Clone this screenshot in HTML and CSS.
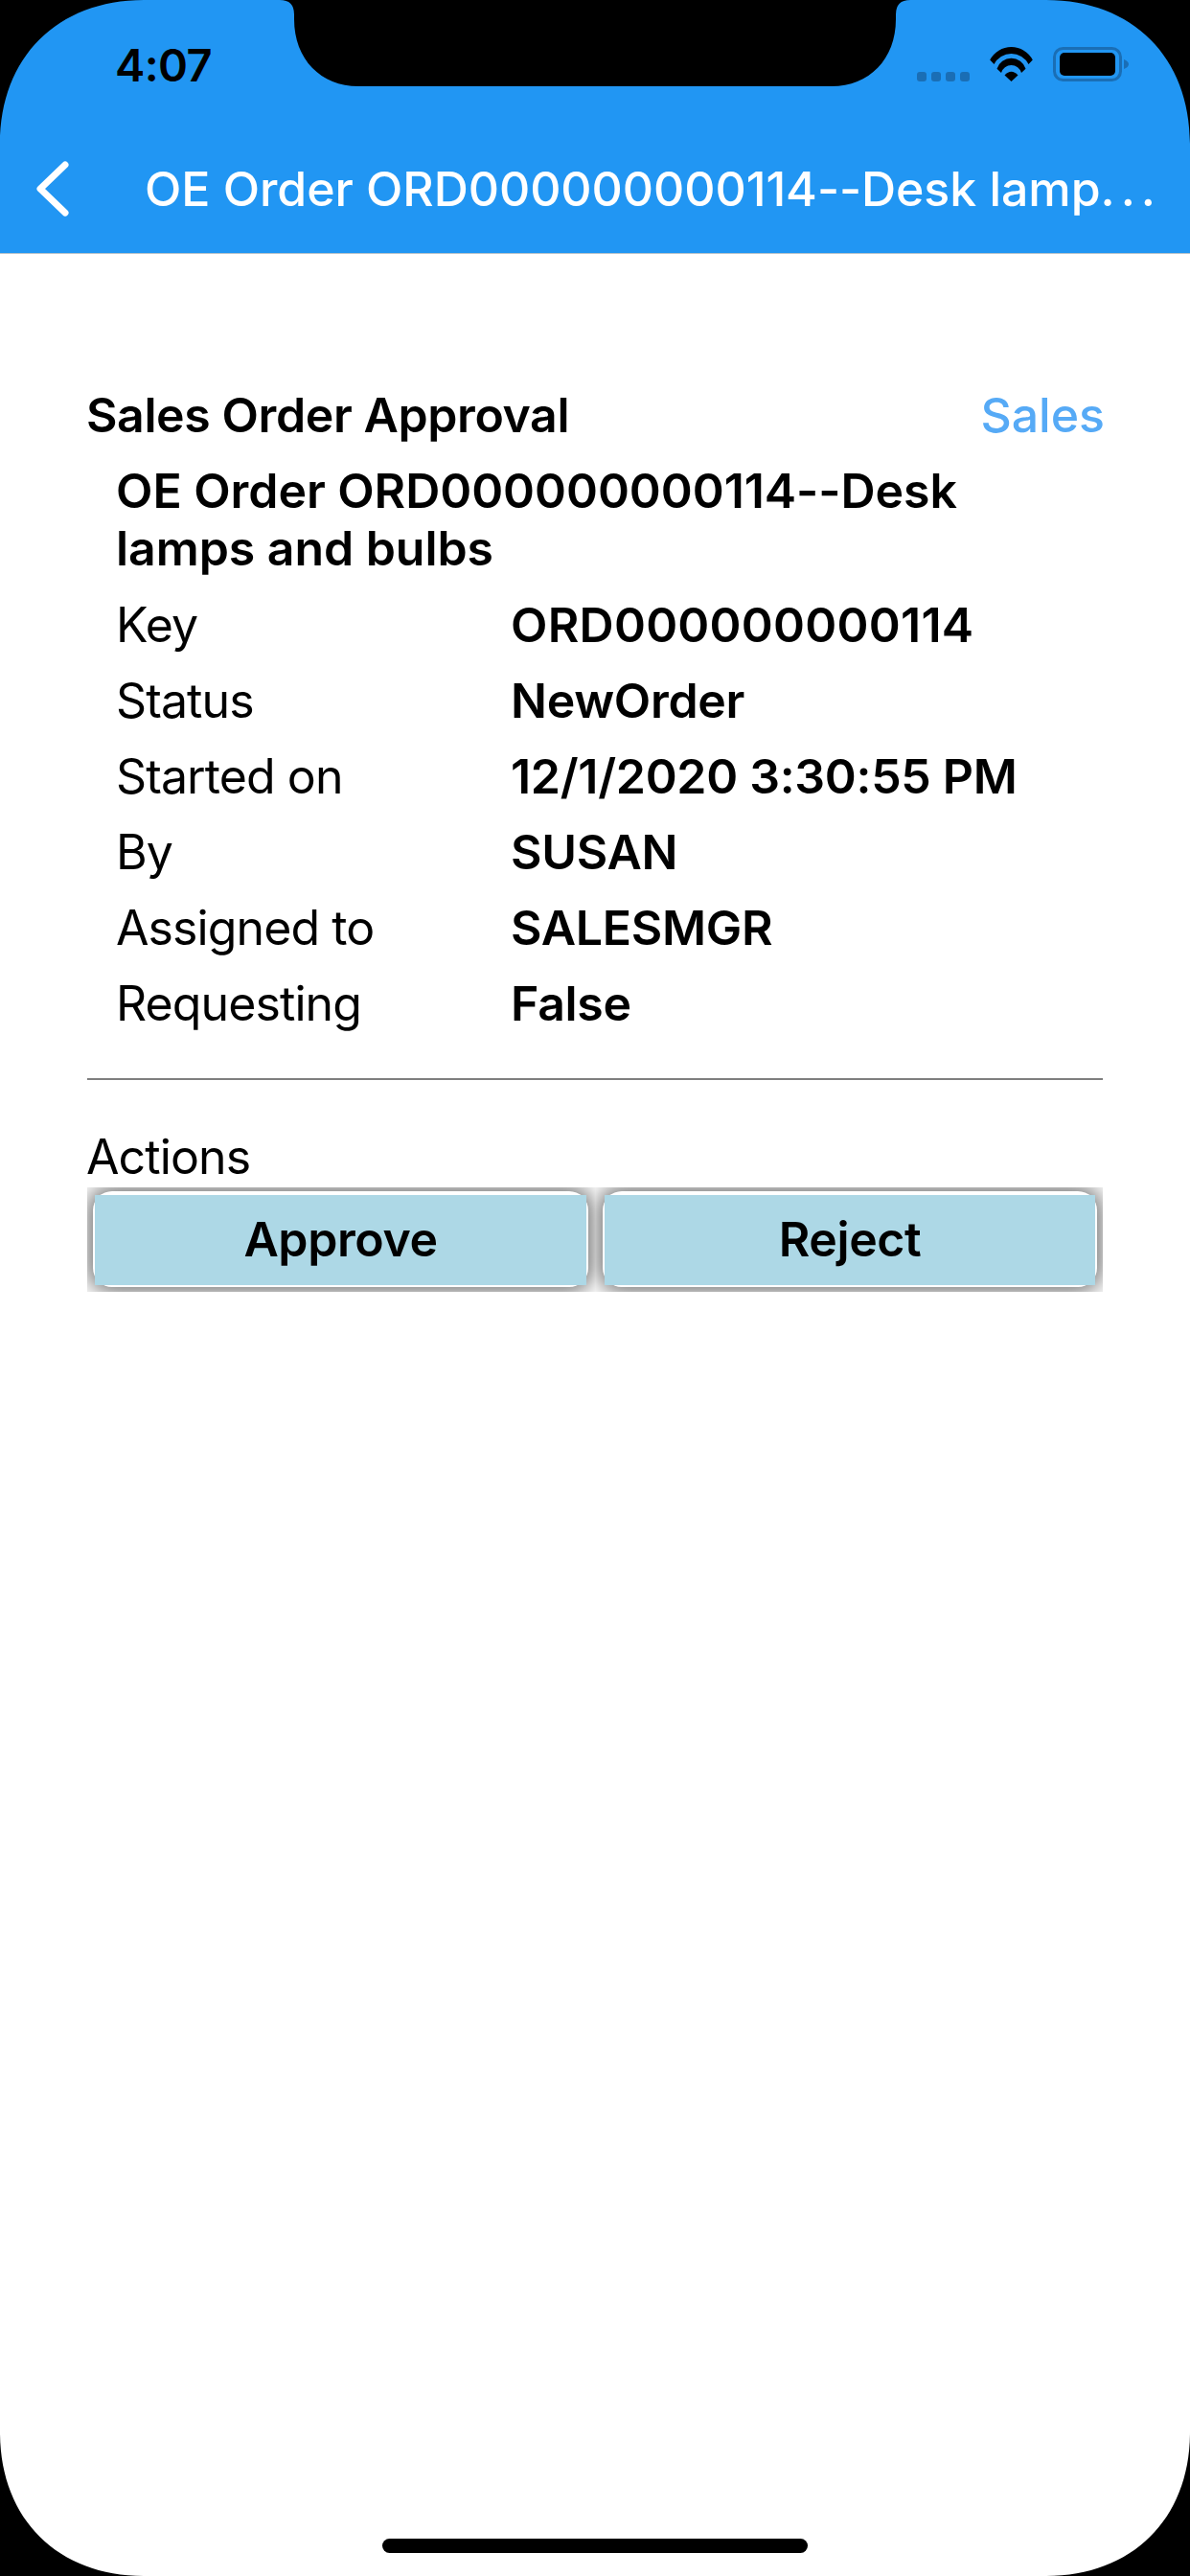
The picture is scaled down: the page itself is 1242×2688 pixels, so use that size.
FILE: index.html
```html
<!DOCTYPE html>
<html lang="en">
<head>
<meta charset="utf-8">
<title>Sales Order Approval</title>
<link rel="stylesheet" href="styles.css">
</head>
<body>
<div class="screen">
  <header class="app-header">
    <div class="status-bar">
      <span class="time">4:07</span>
      <div class="status-icons">
        <svg class="signal" width="55" height="10" viewBox="0 0 55 10"><rect x="0" y="0" width="10" height="10" rx="3"/><rect x="15" y="0" width="10" height="10" rx="3"/><rect x="30" y="0" width="10" height="10" rx="3"/><rect x="45" y="0" width="10" height="10" rx="3"/></svg>
        <svg class="wifi" width="47" height="36" viewBox="0 0 47 36"><path d="M1.200 13.500A25.200 25.200 0 0 1 45.800 13.500L41.500 18A20.200 20.200 0 0 0 5.500 18Z"/><path d="M8.500 22.700A15.800 15.800 0 0 1 38.500 22.700L34 27A10.900 10.900 0 0 0 13 27Z"/><path d="M23.500 36L16.500 29.500Q23.500 22 30.500 29.500Z"/></svg>
        <svg class="battery" width="79" height="36" viewBox="0 0 79 36"><rect class="battery-case" x="1.500" y="1.500" width="69" height="33" rx="9"/><rect class="battery-fill" x="7" y="6" width="58" height="24" rx="5"/><path class="battery-nub" d="M74 13C77 14 79 16 79 18C79 20 77 22 74 23Z"/></svg>
      </div>
    </div>
    <div class="nav-bar">
      <svg class="back" width="36" height="58" viewBox="0 0 36 58"><path d="M31 4L5 29L31 54"/></svg>
      <h1 class="nav-title">OE Order ORD000000000114--Desk lamp<span class="dots">...</span></h1>
    </div>
  </header>

  <main class="content">
    <div class="title-row">
      <span class="form-title">Sales Order Approval</span>
      <span class="category">Sales</span>
    </div>
    <div class="details">
      <h2 class="order-name">OE Order ORD000000000114--Desk lamps and bulbs</h2>
      <dl class="fields">
        <dt>Key</dt><dd class="numeric">ORD000000000114</dd>
        <dt>Status</dt><dd>NewOrder</dd>
        <dt>Started on</dt><dd>12/1/2020 3:30:55 PM</dd>
        <dt>By</dt><dd>SUSAN</dd>
        <dt>Assigned to</dt><dd>SALESMGR</dd>
        <dt>Requesting</dt><dd>False</dd>
      </dl>
    </div>
    <hr class="divider">
    <div class="actions-label">Actions</div>
    <div class="actions">
      <div class="action-cell"><div class="action-frame"><button class="action-btn">Approve</button></div></div>
      <div class="action-cell"><div class="action-frame"><button class="action-btn">Reject</button></div></div>
    </div>
  </main>

  <svg class="bezel" width="1242" height="2688" viewBox="0 0 1242 2688"><path fill-rule="evenodd" d="M0 0H1242V2688H0Z M150 0H292Q307 0 307 15V20C307 62 335 90 374 90H868C907 90 935 62 935 20V15Q935 0 950 0H1092C1182 0 1242 60 1242 150V2538C1242 2628 1182 2688 1092 2688H150C60 2688 0 2628 0 2538V150C0 60 60 0 150 0Z"/></svg>
  <div class="home-indicator"></div>
</div>
</body>
</html>
```
FILE: styles.css
```css
* { box-sizing: border-box; }
html, body { margin: 0; padding: 0; background: #fff; }
body { font-family: Inter, "Liberation Sans", sans-serif; color: #000; }

.screen {
  position: relative;
  width: 1242px;
  height: 2688px;
  overflow: hidden;
  background: #fff;
}

.app-header {
  height: 265px;
  background: #2196f3;
  border-bottom: 1px solid #b9c4cc;
}

.status-bar {
  height: 132px;
  display: flex;
  justify-content: space-between;
  align-items: flex-start;
  padding: 0 64px 0 120px;
}
.time {
  margin-top: 39px;
  font-size: 47px;
  line-height: 58px;
  font-weight: 600;
  letter-spacing: -0.600px;
}
.status-icons {
  display: flex;
  align-items: flex-end;
  margin-top: 49px;
  height: 36px;
}
.signal { fill: #1a6eb5; margin-right: 20px; }
.wifi { fill: #000; margin-right: 20px; }
.battery-case { fill: none; stroke: #1a6eb5; stroke-width: 3; }
.battery-fill { fill: #000; }
.battery-nub { fill: #1a6eb5; }

.nav-bar {
  height: 132px;
  display: flex;
  align-items: center;
  padding-left: 37px;
}
.back {
  flex: none;
  margin-top: -2px;
  fill: none;
  stroke: #fff;
  stroke-width: 7;
  stroke-linecap: round;
  stroke-linejoin: round;
}
.nav-title {
  margin: -2px 0 0 78px;
  font-size: 50px;
  line-height: 60px;
  font-weight: 500;
  color: #fff;
  letter-spacing: -0.050px;
  white-space: nowrap;
}
.dots { letter-spacing: 6px; }

.content {
  padding: 138px 91px 0;
  font-size: 50px;
  line-height: 60px;
  letter-spacing: -0.300px;
}
.title-row {
  display: flex;
  justify-content: space-between;
  font-weight: 560;
}
.form-title { margin-left: -1px; letter-spacing: -0.400px; }
.category { color: #56aaf6; font-weight: 500; letter-spacing: 0; margin-right: -2px; }

.details { padding: 19px 0 0 30px; }
.order-name {
  margin: 0;
  padding-right: 20px;
  font: inherit;
  font-weight: 600;
  letter-spacing: -0.050px;
}
.fields {
  margin: 10px 0 0;
  display: grid;
  grid-template-columns: 412px 1fr;
  grid-auto-rows: 79px;
  align-items: center;
}
.fields dt { font-weight: 400; letter-spacing: -0.900px; }
.fields dd { margin: 0; font-weight: 600; }
.fields .numeric { letter-spacing: 0.250px; }

.divider {
  margin: 39px 0 0;
  border: 0;
  height: 2px;
  background: #7f7f7f;
}
.actions-label { margin-top: 50px; margin-left: -1px; letter-spacing: -0.900px; }
.actions {
  margin-top: 2px;
  display: grid;
  grid-template-columns: 530px 530px;
}
.action-cell {
  height: 109px;
  padding: 4px 6px 5px 8px;
  overflow: hidden;
}
.action-cell:first-child { padding: 4px 7px 5px 6px; }
.action-frame {
  height: 100%;
  padding: 4px 2px 2px;
  background: #fff;
  border-radius: 20px;
  box-shadow: 0 0 22px 6px #777;
}
.action-btn {
  display: block;
  width: 100%;
  height: 100%;
  padding: 0 0 2px;
  border: 0;
  border-radius: 0;
  background: #add8e6;
  color: #000;
  font-family: inherit;
  font-size: 50px;
  line-height: 60px;
  font-weight: 600;
  letter-spacing: -0.400px;
}

.bezel {
  position: absolute;
  top: 0;
  left: 0;
  fill: #000;
  pointer-events: none;
}
.home-indicator {
  position: absolute;
  left: 399px;
  bottom: 24px;
  width: 444px;
  height: 15px;
  background: #000;
  border-radius: 8px;
}
```
